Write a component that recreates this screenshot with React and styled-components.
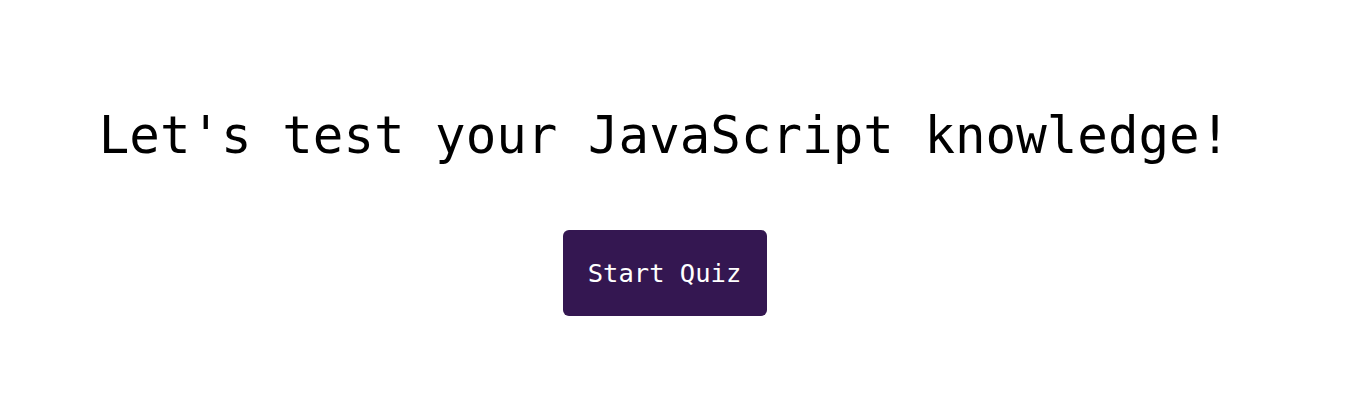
import React from 'react'
import styled, { createGlobalStyle } from 'styled-components'

const GlobalStyle = createGlobalStyle`
body {
    margin: 0;
    background: #ffffff;
    font-family: "DejaVu Sans Mono", "Liberation Mono", monospace;
}
`

const App = () => {
    return (
        <>
            <GlobalStyle />
            <Container>
                <Title>Let's test your JavaScript knowledge!</Title>
                <StartButton>Start Quiz</StartButton>
            </Container>
        </>
    )
}

export default App

const Container = styled.main`
display: flex;
flex-direction: column;
align-items: center;
padding-top: 106px;
padding-right: 17px;
gap: 65px;
`
const Title = styled.h1`
margin: 0;
font-size: 50.8px;
line-height: 59px;
font-weight: 400;
color: #000000;
`
const StartButton = styled.button`
width: 204px;
height: 86px;
border: 0;
border-radius: 6px;
background-color: #341751;
color: #ffffff;
font-family: "DejaVu Sans Mono", "Liberation Mono", monospace;
font-size: 25.5px;
cursor: pointer;
`
